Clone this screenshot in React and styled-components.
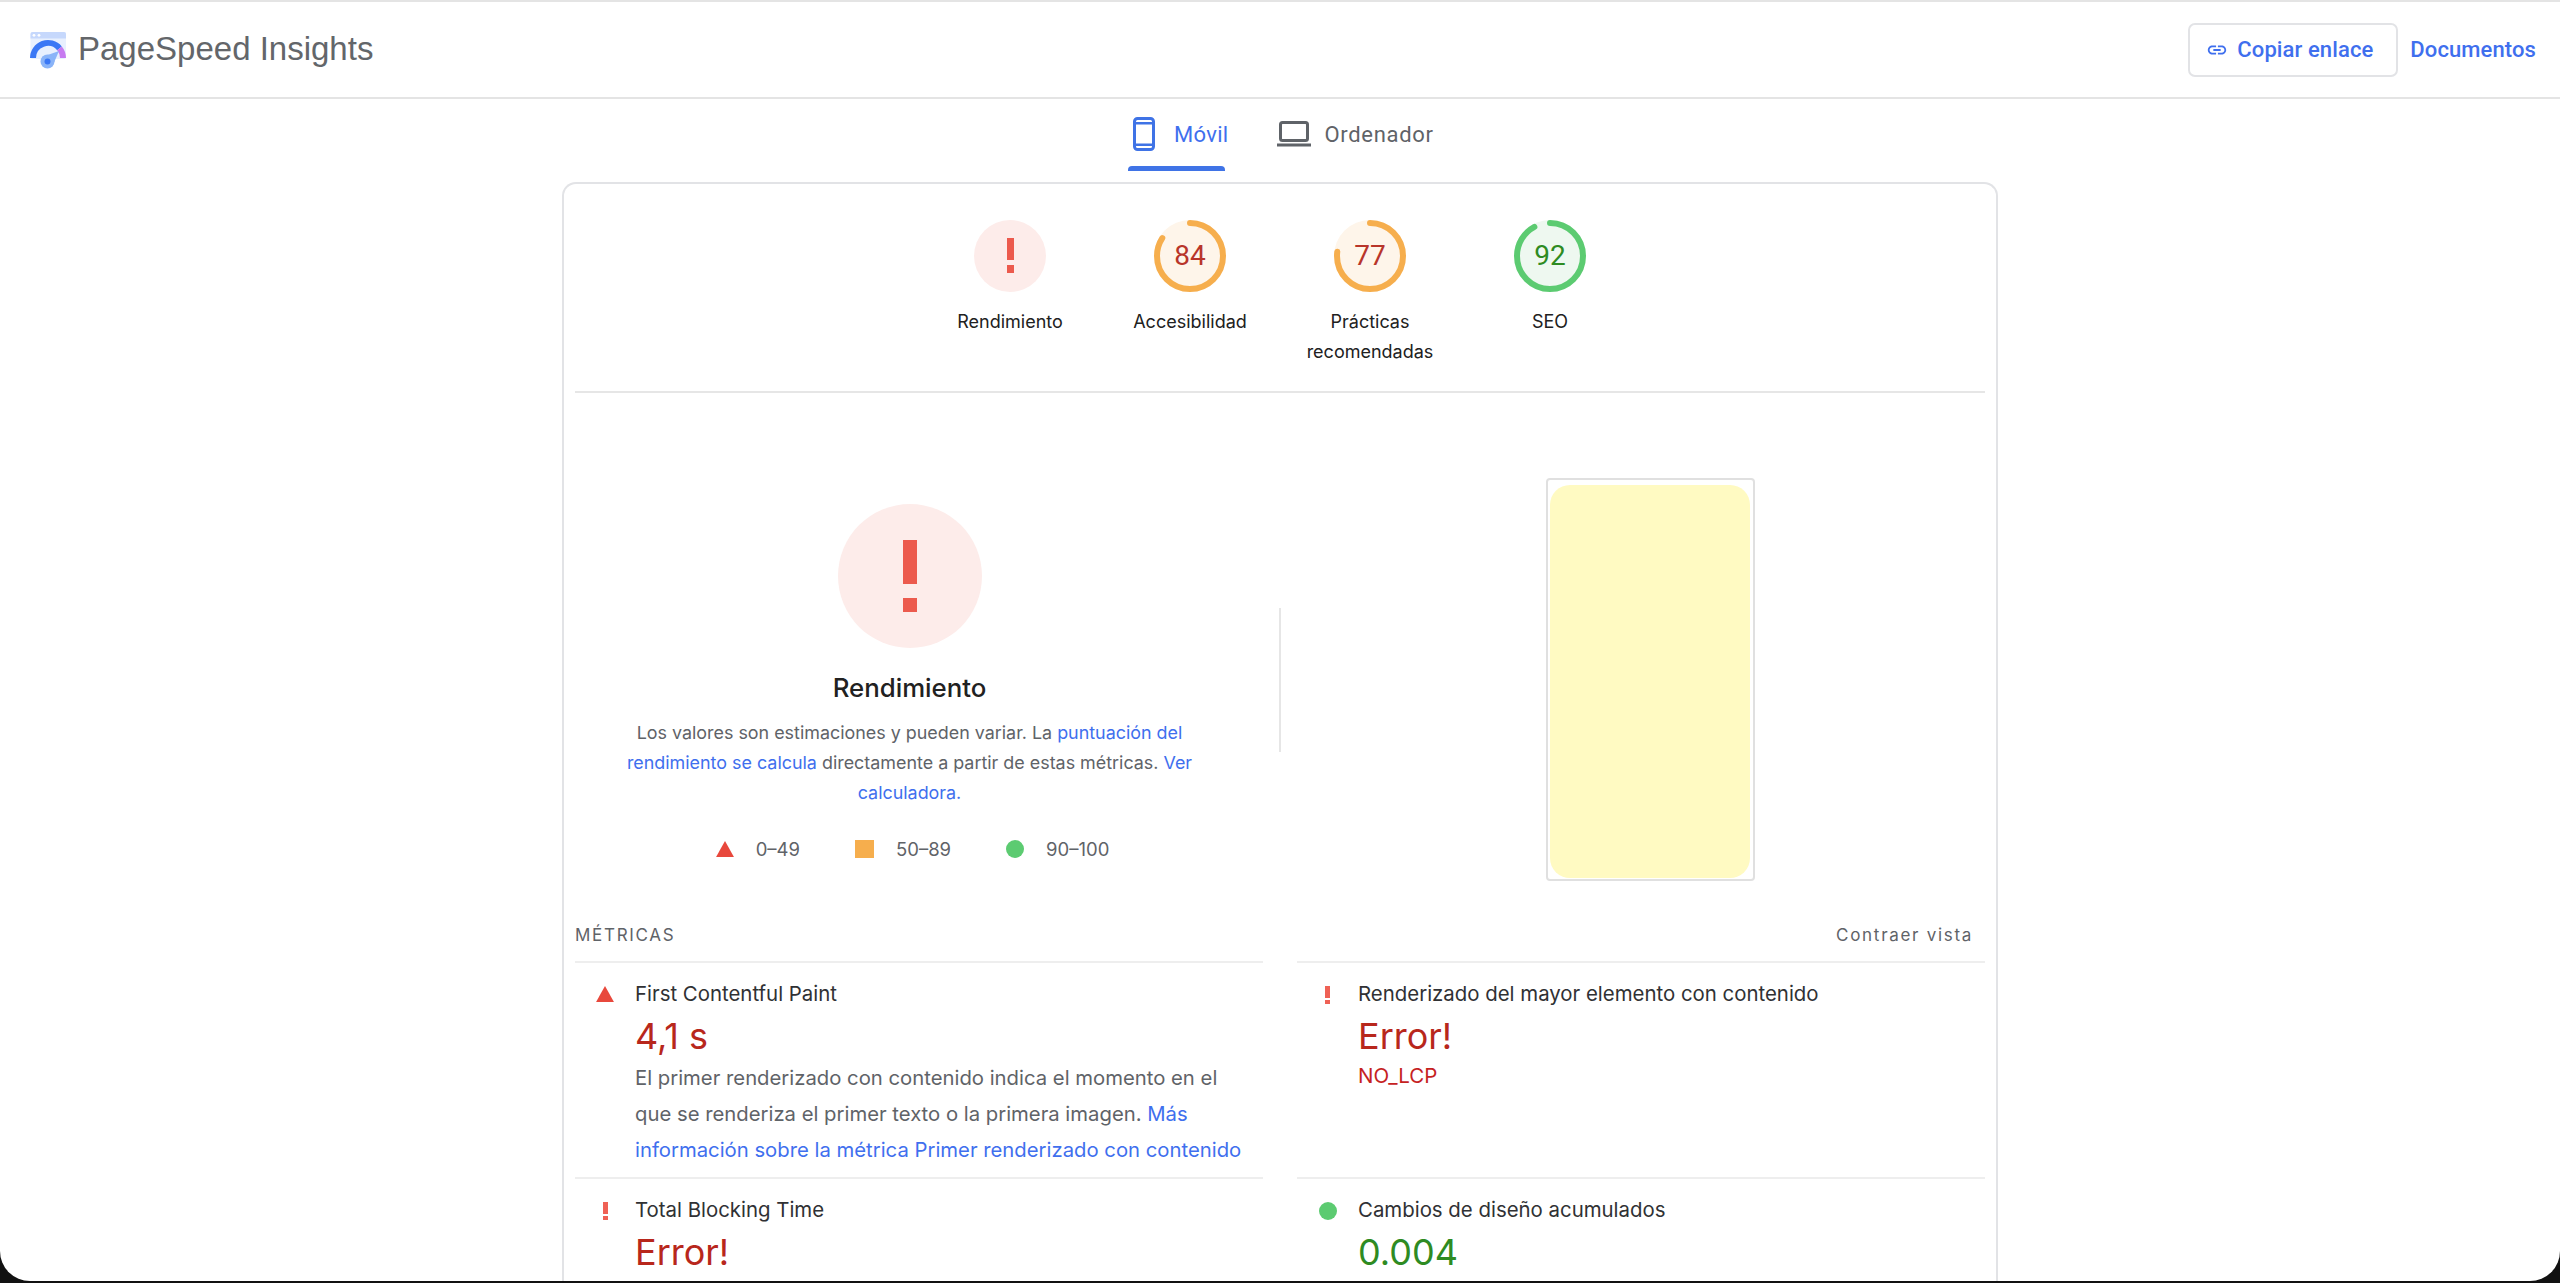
import React from 'react'
import styled, { createGlobalStyle } from 'styled-components'

const GlobalStyle = createGlobalStyle`
  html, body {
    margin: 0;
    height: 100%;
    background: #111;
    overflow: hidden;
  }
  * { box-sizing: border-box; }
`

const Page = styled.div`
  height: 1281px;
  background: #fff;
  border-radius: 0 0 30px 30px;
  overflow: hidden;
  font-family: Inter, Roboto, "Liberation Sans", sans-serif;
  color: #212121;
`

const Header = styled.header`
  height: 99px;
  border-top: 2px solid #e4e4e4;
  border-bottom: 2px solid #e4e4e4;
  display: flex;
  align-items: center;
  justify-content: space-between;
  padding: 0 24px 0 29px;
`

const Brand = styled.div`
  display: flex;
  align-items: center;
  gap: 11px;
  font-family: "Liberation Sans", Arial, sans-serif;
  font-size: 33px;
  color: #63666a;
  padding-bottom: 2px;
  svg { width: 38px; height: 38px; margin-top: 2px; }
`

const HeaderActions = styled.div`
  display: flex;
  align-items: center;
  gap: 12px;
  font-family: Roboto, sans-serif;
`

const CopyButton = styled.button`
  width: 210px;
  height: 54px;
  border: 2px solid #e2e3e6;
  border-radius: 7px;
  background: #fff;
  color: #3f6fee;
  font-family: Roboto, sans-serif;
  font-size: 22px;
  font-weight: 500;
  letter-spacing: 0.1px;
  display: flex;
  align-items: center;
  gap: 9px;
  padding: 0 0 0 16px;
  svg { width: 22px; height: 22px; }
`

const DocsLink = styled.a`
  color: #3f6fee;
  font-size: 22px;
  font-weight: 500;
  letter-spacing: 0.1px;
`

const Tabs = styled.nav`
  height: 72px;
  margin-left: 1128px;
  display: flex;
  align-items: flex-start;
  gap: 49px;
  font-family: Roboto, sans-serif;
`

const Tab = styled.div`
  position: relative;
  height: 72px;
  display: flex;
  align-items: center;
  padding: 0 0 2px ${p => p.$pad}px;
  gap: ${p => p.$gap}px;
  font-size: 22px;
  font-weight: 400;
  letter-spacing: ${p => (p.$active ? 0.3 : 0.7)}px;
  color: ${p => (p.$active ? '#3f6fee' : '#5f6368')};

  &::after {
    content: '';
    display: ${p => (p.$active ? 'block' : 'none')};
    position: absolute;
    left: 0;
    bottom: 0;
    width: 97px;
    height: 5px;
    border-radius: 4px 4px 0 0;
    background: #3f73e6;
  }
`

const Card = styled.main`
  width: 1436px;
  margin: 11px 0 0 562px;
  height: 1100px;
  border: 2px solid #e2e3e6;
  border-bottom: 0;
  border-radius: 14px 14px 0 0;
  padding: 0 11px;
`

const GaugeRow = styled.section`
  height: 209px;
  border-bottom: 2px solid #e6e6e6;
  display: flex;
  justify-content: center;
  padding: 36px 0 0 0;
`

const GaugeItem = styled.div`
  width: 180px;
  display: flex;
  flex-direction: column;
  align-items: center;
  text-align: center;
  font-size: 18px;
  font-weight: 400;
  line-height: 30px;
  color: #212121;
`

const GaugeCircle = styled.div`
  position: relative;
  width: ${p => p.$size}px;
  height: ${p => p.$size}px;
  margin-bottom: 15px;
  svg { display: block; width: 100%; height: 100%; transform: rotate(-90deg); }
`

const GaugeValue = styled.span`
  position: absolute;
  inset: 0;
  display: flex;
  align-items: center;
  justify-content: center;
  font-family: Roboto, sans-serif;
  font-size: 28px;
  font-weight: 400;
  color: ${p => p.$color};
`

const Overview = styled.section`
  display: flex;
  height: 527px;
  padding-top: 7px;
`

const ScoreColumn = styled.div`
  width: 704px;
  display: flex;
  flex-direction: column;
  align-items: center;
  padding: 104px 35px 0 0;
`

const BigGauge = styled.div`
  position: relative;
  width: 144px;
  height: 144px;
  border-radius: 50%;
  background: #fdecea;
`

const Bang = styled.span`
  position: absolute;
  left: 50%;
  top: ${p => p.$top}px;
  width: ${p => p.$w}px;
  height: ${p => p.$h}px;
  margin-left: -${p => p.$w / 2}px;
  background: #ec5a4d;
`

const ScoreTitle = styled.h2`
  margin: 21px 0 0;
  font-size: 25.800px;
  line-height: 38px;
  font-weight: 500;
  color: #212121;
`

const ScoreText = styled.p`
  width: 590px;
  margin: 11px 0 0;
  font-size: 17.900px;
  line-height: 30px;
  text-align: center;
  color: #5f6368;
`

const TextLink = styled.a`
  color: #3f6fee;
`

const Legend = styled.div`
  display: flex;
  align-items: center;
  gap: 55px;
  margin-top: 30px;
  padding-left: 6px;
  font-size: 18.500px;
  color: #5f6368;
`

const LegendItem = styled.span`
  display: flex;
  align-items: center;
  gap: 22px;
`

const Divider = styled.div`
  width: 2px;
  height: 144px;
  margin-top: 208px;
  background: #e6e6e6;
`

const ShotColumn = styled.div`
  flex: 1;
  display: flex;
  justify-content: center;
  padding: 78px 0 0 35px;
`

const PhoneFrame = styled.div`
  width: 209px;
  height: 403px;
  border: 2px solid #e0e0e0;
  border-radius: 4px;
  padding: 5px 3px 1px 2px;
`

const PhoneScreen = styled.div`
  height: 100%;
  border-radius: 20px;
  background: #fffac2;
`

const MetricsHead = styled.div`
  display: flex;
  justify-content: space-between;
  align-items: center;
  height: 30px;
  padding-right: 12px;
  font-size: 17px;
  letter-spacing: 1.700px;
  color: #5f6368;
`

const MetricsGrid = styled.div`
  display: grid;
  grid-template-columns: 688px 688px;
  justify-content: space-between;
  margin-top: 11px;
`

const Metric = styled.article`
  display: grid;
  grid-template-columns: ${p => (p.$right ? 61 : 60)}px 1fr;
  min-height: 216px;
  border-top: 2px solid #eeeeee;
  padding-top: 15px;
`

const MetricIcon = styled.div`
  display: flex;
  justify-content: center;
  padding-top: 8px;
  height: 32px;
`

const MetricName = styled.div`
  font-size: 20.400px;
  line-height: 32px;
  color: #303134;
`

const MetricValue = styled.div`
  font-size: 36px;
  line-height: 48px;
  margin-top: 2px;
  color: ${p => p.$color};
`

const MetricNote = styled.div`
  font-size: 20.500px;
  line-height: 30px;
  margin-top: 1px;
  color: #c5221f;
`

const MetricText = styled.div`
  max-width: 612px;
  font-size: 20.300px;
  line-height: 36px;
  color: #5f6368;
`

const Triangle = ({ size = 18 }) => (
  <svg width={size} height={size * 0.9} viewBox="0 0 18 16" aria-hidden="true">
    <path d="M9 0 18 16H0Z" fill="#e8483c" />
  </svg>
)

const Square = () => (
  <svg width="19" height="18" viewBox="0 0 19 18" aria-hidden="true">
    <rect width="19" height="18" fill="#f6ae4d" />
  </svg>
)

const Dot = () => (
  <svg width="18" height="18" viewBox="0 0 18 18" aria-hidden="true">
    <circle cx="9" cy="9" r="9" fill="#5ccb71" />
  </svg>
)

const SmallBang = () => (
  <svg width="5" height="18" viewBox="0 0 5 18" aria-hidden="true">
    <path d="M0 0h5v12H0zM0 14h5v4H0z" fill="#ef6155" />
  </svg>
)

const Logo = () => (
  <svg viewBox="0 0 38 38" aria-hidden="true">
    <rect x="1.500" y="1" width="35.500" height="27" rx="2" fill="#e8f0fe" />
    <path d="M1.500 3a2 2 0 0 1 2-2H35a2 2 0 0 1 2 2v4.500H1.500z" fill="#c6d8fc" />
    <circle cx="5" cy="4.300" r="1.400" fill="#fff" />
    <circle cx="10" cy="4.300" r="1.400" fill="#fff" />
    <path d="M1 27a18 18 0 0 1 31.800-11.600l-4.600 3.900A12 12 0 0 0 7 27z" fill="#3b78f5" />
    <path d="M32.800 15.400A18 18 0 0 1 37 27h-6a12 12 0 0 0-2.800-7.700z" fill="#c77bf0" />
    <path d="M30 20 24 34 13 26z" fill="#8ab4f8" />
    <circle cx="18.500" cy="30.500" r="7" fill="#8ab4f8" />
    <circle cx="18.500" cy="30.500" r="3" fill="#3b78f5" />
  </svg>
)

const LinkIcon = () => (
  <svg viewBox="0 0 24 24" fill="#3f6fee" aria-hidden="true">
    <path d="M3.900 12c0-1.710 1.390-3.100 3.100-3.100h4V7H7c-2.760 0-5 2.240-5 5s2.240 5 5 5h4v-1.900H7c-1.710 0-3.100-1.390-3.100-3.100zM8 13h8v-2H8v2zm9-6h-4v1.900h4c1.710 0 3.100 1.390 3.100 3.100s-1.390 3.100-3.100 3.100h-4V17h4c2.760 0 5-2.240 5-5s-2.240-5-5-5z" />
  </svg>
)

const PhoneIcon = () => (
  <svg width="22" height="34" viewBox="0 0 22 34" aria-hidden="true">
    <rect x="1.500" y="1.500" width="19" height="31" rx="3" fill="none" stroke="#3f73e6" strokeWidth="3" />
    <rect x="2" y="5" width="18" height="2.500" fill="#3f73e6" />
    <rect x="2" y="26.500" width="18" height="2.500" fill="#3f73e6" />
  </svg>
)

const LaptopIcon = () => (
  <svg width="34" height="26" viewBox="0 0 34 26" aria-hidden="true">
    <rect x="3.500" y="1.500" width="27" height="18" rx="2" fill="none" stroke="#5f6368" strokeWidth="3" />
    <rect x="0" y="22.500" width="34" height="3" fill="#5f6368" />
  </svg>
)

const Ring = ({ score, color, track }) => {
  const r = 33
  const c = 2 * Math.PI * r
  return (
    <svg viewBox="0 0 72 72" aria-hidden="true">
      <circle cx="36" cy="36" r="36" fill={track} />
      <circle
        cx="36"
        cy="36"
        r={r}
        fill="none"
        stroke={color}
        strokeWidth="6"
        strokeLinecap="round"
        strokeDasharray={`${(score / 100) * c} ${c}`}
      />
    </svg>
  )
}

const scores = [
  { label: 'Accesibilidad', score: 84, color: '#f6ae4d', track: '#fef5ea', text: '#b8352a' },
  { label: 'Prácticas recomendadas', score: 77, color: '#f6ae4d', track: '#fef5ea', text: '#b8352a' },
  { label: 'SEO', score: 92, color: '#5ccb71', track: '#eef8f0', text: '#2e8b22' },
]

export default function App() {
  return (
    <Page>
      <GlobalStyle />
      <Header>
        <Brand>
          <Logo />
          PageSpeed Insights
        </Brand>
        <HeaderActions>
          <CopyButton>
            <LinkIcon />
            Copiar enlace
          </CopyButton>
          <DocsLink>Documentos</DocsLink>
        </HeaderActions>
      </Header>

      <Tabs>
        <Tab $active $pad={5} $gap={19}>
          <PhoneIcon />
          Móvil
        </Tab>
        <Tab $pad={0} $gap={13}>
          <LaptopIcon />
          Ordenador
        </Tab>
      </Tabs>

      <Card>
        <GaugeRow>
          <GaugeItem>
            <GaugeCircle $size={72}>
              <Ring score={0} color="transparent" track="#fdecea" />
              <Bang $top={18} $w={7} $h={22} />
              <Bang $top={45} $w={7} $h={8} />
            </GaugeCircle>
            Rendimiento
          </GaugeItem>
          {scores.map(s => (
            <GaugeItem key={s.label}>
              <GaugeCircle $size={72}>
                <Ring score={s.score} color={s.color} track={s.track} />
                <GaugeValue $color={s.text}>{s.score}</GaugeValue>
              </GaugeCircle>
              {s.label}
            </GaugeItem>
          ))}
        </GaugeRow>

        <Overview>
          <ScoreColumn>
            <BigGauge>
              <Bang $top={36} $w={14} $h={44} />
              <Bang $top={94} $w={14} $h={14} />
            </BigGauge>
            <ScoreTitle>Rendimiento</ScoreTitle>
            <ScoreText>
              Los valores son estimaciones y pueden variar. La{' '}
              <TextLink>puntuación del rendimiento se calcula</TextLink> directamente a partir de
              estas métricas. <TextLink>Ver calculadora.</TextLink>
            </ScoreText>
            <Legend>
              <LegendItem>
                <Triangle />
                0–49
              </LegendItem>
              <LegendItem>
                <Square />
                50–89
              </LegendItem>
              <LegendItem>
                <Dot />
                90–100
              </LegendItem>
            </Legend>
          </ScoreColumn>
          <Divider />
          <ShotColumn>
            <PhoneFrame>
              <PhoneScreen />
            </PhoneFrame>
          </ShotColumn>
        </Overview>

        <MetricsHead>
          <span>MÉTRICAS</span>
          <span>Contraer vista</span>
        </MetricsHead>

        <MetricsGrid>
          <Metric>
            <MetricIcon><Triangle /></MetricIcon>
            <div>
              <MetricName>First Contentful Paint</MetricName>
              <MetricValue $color="#b8271c">4,1 s</MetricValue>
              <MetricText>
                El primer renderizado con contenido indica el momento en el que se renderiza el
                primer texto o la primera imagen.{' '}
                <TextLink>Más información sobre la métrica Primer renderizado con contenido</TextLink>
              </MetricText>
            </div>
          </Metric>
          <Metric $right>
            <MetricIcon><SmallBang /></MetricIcon>
            <div>
              <MetricName>Renderizado del mayor elemento con contenido</MetricName>
              <MetricValue $color="#b8271c">Error!</MetricValue>
              <MetricNote>NO_LCP</MetricNote>
            </div>
          </Metric>
          <Metric>
            <MetricIcon><SmallBang /></MetricIcon>
            <div>
              <MetricName>Total Blocking Time</MetricName>
              <MetricValue $color="#b8271c">Error!</MetricValue>
            </div>
          </Metric>
          <Metric $right>
            <MetricIcon><Dot /></MetricIcon>
            <div>
              <MetricName>Cambios de diseño acumulados</MetricName>
              <MetricValue $color="#2e8b22">0.004</MetricValue>
            </div>
          </Metric>
        </MetricsGrid>
      </Card>
    </Page>
  )
}
